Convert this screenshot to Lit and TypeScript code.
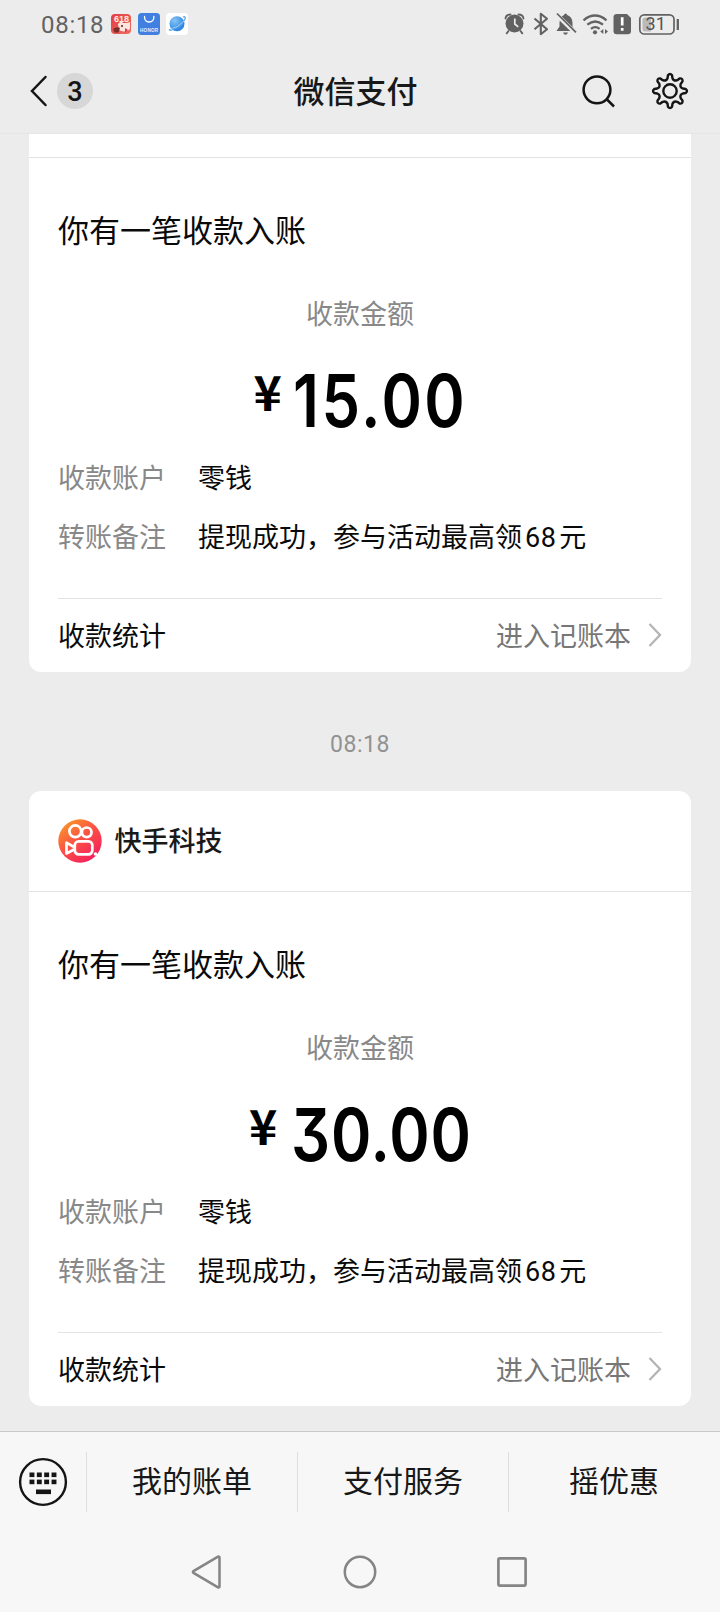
import { LitElement, html, css, svg } from "lit";
import { customElement, property } from "lit/decorators.js";

const gearPath = (() => {
  // Eight rounded teeth sampled around the centre of a 40-unit box.
  const pts: string[] = [];
  for (let i = 0; i < 8; i++) {
    const base = (i * 45 - 90) * (Math.PI / 180);
    const at = (deg: number, r: number) => {
      const a = base + (deg * Math.PI) / 180;
      return `${(20 + r * Math.cos(a)).toFixed(2)} ${(20 + r * Math.sin(a)).toFixed(2)}`;
    };
    pts.push(`${i ? "L" : "M"}${at(-11, 13)}`);
    pts.push(`L${at(-7.5, 15.8)}Q${at(0, 18.3)} ${at(7.5, 15.8)}`);
    pts.push(`L${at(11, 13)}Q${at(22.5, 10.2)} ${at(34, 13)}`);
  }
  return pts.join("") + "Z";
})();

@customElement("status-bar")
class StatusBar extends LitElement {
  static styles = css`
    :host { display: flex; height: 48px; align-items: center; justify-content: space-between; padding: 0 41px 0 41px; color: #626262; }
    .side { display: flex; align-items: center; height: 48px; }
    .time { font: 400 24px/48px Roboto, sans-serif; letter-spacing: .7px; width: 69px; padding-top: 1px; }
    svg { display: block; flex: none; }
    .right { margin-right: -1px; }
    .batt { font: 400 18px Roboto, sans-serif; }
    .tiny { font: 700 4.6px "Liberation Sans", sans-serif; letter-spacing: .3px; }
    .sale { font: 700 9px "Liberation Sans", sans-serif; }
  `;
  render() {
    return html`
      <div class="side">
        <div class="time">08:18</div>
        <svg width="79" height="24" viewBox="110 12 79 24">
          <defs>
            <linearGradient id="r" x1="0" y1="0" x2="1" y2="1"><stop offset="0" stop-color="#e23c44"/><stop offset="1" stop-color="#ee6d63"/></linearGradient>
            <radialGradient id="b" cx=".35" cy=".3" r=".8"><stop offset="0" stop-color="#86c5f6"/><stop offset="1" stop-color="#1c78dc"/></radialGradient>
          </defs>
          <rect x="111" y="14" width="20" height="20" rx="4" fill="url(#r)"/>
          <path d="M118 24l3-3 2 2h4l3-1v7c-3 3-8 3-11 1z" fill="#fbe6df"/>
          <path d="M113 29q4-3 7-1l-1.500 4.500h-4z" fill="#7b2f28"/>
          <circle cx="122" cy="26" r="1" fill="#5c2020"/>
          <path d="M125 28l3 2-3 3z" fill="#d9404a"/>
          <text x="114" y="22" class="sale" fill="#ffe9dc">618</text>
          <rect x="138" y="13" width="22" height="22" rx="3.500" fill="#417fe0"/>
          <path d="M144.500 16.500q0 5.500 4.700 5.500t4.700-5.500" fill="none" stroke="#fff" stroke-width="1.300" stroke-linecap="round"/>
          <text x="149.200" y="32" text-anchor="middle" class="tiny" fill="#e6f0ff">HONOR</text>
          <rect x="166" y="13" width="22" height="22" rx="4" fill="#fff"/>
          <circle cx="177" cy="23.700" r="7.500" fill="url(#b)"/>
          <path d="M183 17q3-1 2 2-3 6-11 10-5 2.500-4.500 0" fill="none" stroke="#5aa4ea" stroke-width="1.300"/>
          <path d="M170 29q8-1 14-8" fill="none" stroke="#a8d4f8" stroke-width=".8"/>
        </svg>
      </div>
      <svg class="right" width="176" height="26" viewBox="504 11 176 26" fill="#626262">
        <circle cx="514.500" cy="23.500" r="9"/>
        <path d="M505.500 18.500q.5-4 5-4M523.500 18.500q-.5-4-5-4M508.500 31l-1.800 2.300M520.500 31l1.800 2.300" fill="none" stroke="#626262" stroke-width="1.900" stroke-linecap="round"/>
        <path d="M514.800 18.500v5.500l3.400 2.800" fill="none" stroke="#ececec" stroke-width="1.700"/>
        <path d="M534.500 18.500l12.500 10.700-6.200 5V13.700l6.200 5-12.500 10.600" fill="none" stroke="#626262" stroke-width="2.100" stroke-linejoin="round"/>
        <path d="M565.500 13.500q1.500 0 1.700 1.500 5.300 2 5.300 8v3.500l3 4.500h-19l3-4.500v-3.500q0-6 4.500-8 .3-1.500 1.500-1.500z"/>
        <path d="M563 32.500h5q-1 2.300-2.500 2.300t-2.500-2.300z"/>
        <path d="M556.500 14.500l19 18.500" stroke="#ececec" stroke-width="4.500"/>
        <path d="M557 13.500l19 18.800" stroke="#626262" stroke-width="1.700"/>
        <g fill="none" stroke="#626262" stroke-width="2.300">
          <path d="M583.500 20.300q11.500-9.500 23 0M587.300 24.700q8-6.500 15.700 0M591 28.800q4.300-3.400 8.600 0"/>
        </g>
        <circle cx="595" cy="32.300" r="2.100"/>
        <path d="M603.300 29v5l-3-2.500zM605 29v5l3-2.500z"/>
        <path d="M617 14h10l4 4v13q0 3.300-3.300 3.300h-10.900q-3.300 0-3.300-3.300V17.300q0-3.300 3.500-3.300z"/>
        <path d="M622.200 17.300v8.200M622.200 28v2.800" stroke="#fff" stroke-width="2.700"/>
        <rect x="639.800" y="14.800" width="34.200" height="19.200" rx="4.500" fill="none" stroke="#626262" stroke-width="1.700"/>
        <path d="M645 17.500h6v14h-6q-2.500 0-2.500-2.500v-9q0-2.500 2.500-2.500z" fill="#bababa"/>
        <text x="655.700" y="30.300" text-anchor="middle" class="batt" fill="#555">31</text>
        <path d="M677.800 19v11" stroke="#626262" stroke-width="2.300"/>
      </svg>`;
  }
}

@customElement("nav-header")
class NavHeader extends LitElement {
  static styles = css`
    :host { display: grid; grid-template-columns: 1fr auto 1fr; height: 85px; align-items: center; padding: 0 30px 0 29px; border-bottom: 1px solid #e6e6e6; box-sizing: content-box; }
    .left { display: flex; align-items: center; gap: 9px; }
    .count { width: 36px; height: 36px; border-radius: 50%; background: #d7d7d7; font: 500 27px/38px Roboto, sans-serif; color: #151515; text-align: center; }
    .title { font: 500 31px/46px "Noto Sans CJK SC", sans-serif; color: #181818; margin-right: 8px; padding-bottom: 2px; }
    .right { display: flex; justify-content: flex-end; gap: 33px; }
    svg { display: block; }
  `;
  render() {
    return html`
      <div class="left">
        <svg width="19" height="32" viewBox="0 0 19 32"><path d="M16.500 2L3 16l13.500 14" fill="none" stroke="#151515" stroke-width="2.500" stroke-linecap="round" stroke-linejoin="miter"/></svg>
        <div class="count">3</div>
      </div>
      <div class="title">微信支付</div>
      <div class="right">
        <svg width="36" height="40" viewBox="0 0 36 40"><g fill="none" stroke="#151515" stroke-width="2.500"><circle cx="16" cy="18.800" r="13.400"/><path d="M25.500 28L33 35.500"/></g></svg>
        <svg width="40" height="40" viewBox="0 0 40 40"><g fill="none" stroke="#151515" stroke-width="2.400" stroke-linejoin="round"><path d=${gearPath}/><circle cx="20" cy="20" r="6.700"/></g></svg>
      </div>`;
  }
}

@customElement("receipt-card")
class ReceiptCard extends LitElement {
  @property() amount = "";
  @property({ type: Boolean }) clipped = false;
  static styles = css`
    :host { display: block; margin: 0 29px; background: #fff; border-radius: 12px; font: 400 27px/40px "Noto Sans CJK SC", sans-serif; color: #0a0a0a; }
    :host([clipped]) { border-radius: 0 0 12px 12px; }
    .head { height: 100px; box-sizing: border-box; padding: 0 28.5px; display: flex; align-items: center; gap: 13px; font-weight: 500; color: #191919; }
    .head span { padding-bottom: 2px; }
    .stub { height: 23px; }
    .head svg { display: block; }
    .body { border-top: 1px solid #e3e3e3; padding: 48px 29px 0; }
    .title { font-size: 31px; line-height: 46px; }
    .caption { text-align: center; color: #888; margin-top: 41px; }
    .money { display: flex; justify-content: center; align-items: flex-start; margin-top: 25px; height: 99px; color: #000; }
    .sign { font-size: 48px; line-height: 65px; font-weight: 700; width: 27px; margin-right: 15px; }
    .digits { width: 180px; font: 600 73px/86px Inter, Roboto, sans-serif; font-feature-settings: "cv09" 1; letter-spacing: 1px; white-space: nowrap; transform: scaleX(.84); transform-origin: 0 50%; }
    .digits.narrow { width: 174px; letter-spacing: 3px; margin-left: -3px; }
    .row { display: flex; height: 40px; margin-bottom: 19px; }
    .key { width: 140px; color: #888; }
    .num { padding: 0 3px; font: 400 27px Roboto, sans-serif; letter-spacing: .5px; }
    .foot { margin-top: 42px; border-top: 1px solid #e3e3e3; height: 73px; display: flex; align-items: center; justify-content: space-between; }
    .foot span { padding-bottom: 1px; }
    .link { display: flex; align-items: center; color: #777; gap: 17px; }
    .link svg { display: block; }
  `;
  render() {
    return html`
      ${this.clipped
        ? html`<div class="stub"></div>`
        : html`<div class="head">
            <svg width="44" height="44" viewBox="0 0 44 44">
              <defs><linearGradient id="k" x1=".1" y1=".05" x2=".75" y2=".9"><stop offset="0" stop-color="#fa9a28"/><stop offset=".5" stop-color="#fb5343"/><stop offset="1" stop-color="#f5245b"/></linearGradient></defs>
              <circle cx="22" cy="22" r="21.700" fill="url(#k)"/>
              <g fill="none" stroke="#fff" stroke-width="2.700" stroke-linejoin="round">
                <circle cx="17.300" cy="12.300" r="5.900"/><circle cx="28.700" cy="13.300" r="4.800"/>
                <rect x="16.800" y="22.300" width="17.500" height="13" rx="3.800"/>
                <path d="M16 28l-7.500-4.300v10.800L16 30.500"/>
              </g>
              <circle cx="37.500" cy="35" r="1.800" fill="#fff"/>
            </svg>
            <span>快手科技</span>
          </div>`}
      <div class="body">
        <div class="title">你有一笔收款入账</div>
        <div class="caption">收款金额</div>
        <div class="money"><span class="sign">¥</span><span class="digits ${this.amount.startsWith("1") ? "narrow" : ""}">${this.amount}</span></div>
        <div class="row"><span class="key">收款账户</span><span>零钱</span></div>
        <div class="row"><span class="key">转账备注</span><span>提现成功，参与活动最高领<span class="num">68</span>元</span></div>
        <div class="foot">
          <span>收款统计</span>
          <span class="link">进入记账本
            <svg width="14" height="26" viewBox="0 0 14 26"><path d="M1.500 2L12 13 1.500 24" fill="none" stroke="#b4b4b4" stroke-width="2.300"/></svg>
          </span>
        </div>
      </div>`;
  }
}

@customElement("bottom-menu")
class BottomMenu extends LitElement {
  static styles = css`
    :host { display: block; background: #f7f7f7; border-top: 1px solid #c8c8c8; height: 180px; }
    .menu { display: flex; height: 100px; align-items: center; font: 400 30px/44px "Noto Sans CJK SC", sans-serif; color: #181818; }
    .kb { width: 86px; display: flex; justify-content: center; }
    .item { flex: 0 0 211px; box-sizing: border-box; height: 60px; line-height: 55px; border-left: 1px solid #dedede; text-align: center; }
    svg { display: block; }
    .nav { display: flex; align-items: center; height: 80px; gap: 118px; padding-left: 188px; }
  `;
  render() {
    const keys = [0, 1].flatMap((r) => [0, 1, 2, 3].map((c) => svg`<rect x=${11.5 + c * 7.35} y=${15.5 + r * 7.1} width="4.9" height="4.6" fill="#151515"/>`));
    return html`
      <div class="menu">
        <div class="kb"><svg width="50" height="50" viewBox="0 0 50 50"><circle cx="25" cy="25" r="22.900" fill="none" stroke="#151515" stroke-width="2.400"/>${keys}<rect x="18" y="32.500" width="15" height="4.600" fill="#151515"/></svg></div>
        <div class="item">我的账单</div>
        <div class="item">支付服务</div>
        <div class="item">摇优惠</div>
      </div>
      <div class="nav">
        <svg width="36" height="36" viewBox="0 0 36 36"><path d="M31.500 3.300v29.400q-.3 1.200-1.500.6L5.500 18.900q-1.200-.9 0-1.800L30 2.700q1.200-.6 1.500.6z" fill="none" stroke="#858585" stroke-width="2.500"/></svg>
        <svg width="36" height="36" viewBox="0 0 36 36"><circle cx="18" cy="18" r="15.200" fill="none" stroke="#858585" stroke-width="2.500"/></svg>
        <svg width="34" height="36" viewBox="0 0 34 36"><rect x="2.400" y="4.400" width="27.200" height="27.200" rx="1.500" fill="none" stroke="#858585" stroke-width="2.700"/></svg>
      </div>`;
  }
}

@customElement("app-root")
class AppRoot extends LitElement {
  static styles = css`
    :host { display: flex; flex-direction: column; width: 720px; height: 1612px; background: #ececec; overflow: hidden; }
    .feed { flex: 1; min-height: 0; }
    .stamp { height: 119px; display: flex; align-items: center; justify-content: center; font: 400 23px/30px Roboto, sans-serif; letter-spacing: .5px; color: #929292; box-sizing: border-box; padding-top: 27px; }
  `;
  render() {
    return html`
      <status-bar></status-bar>
      <nav-header></nav-header>
      <div class="feed">
        <receipt-card clipped amount="15.00"></receipt-card>
        <div class="stamp">08:18</div>
        <receipt-card amount="30.00"></receipt-card>
      </div>
      <bottom-menu></bottom-menu>`;
  }
}
